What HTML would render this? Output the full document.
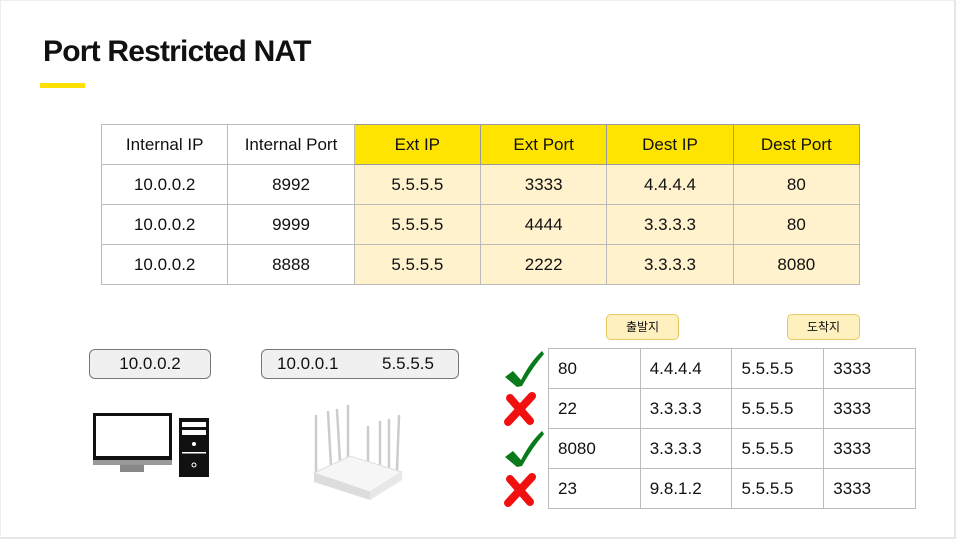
<!DOCTYPE html>
<html><head><meta charset="utf-8"><style>
*{margin:0;padding:0;box-sizing:border-box}
body{width:960px;height:542px;background:#fff;position:relative;overflow:hidden;font-family:"Liberation Sans","Noto Sans CJK KR",sans-serif;color:#111}
.frame{position:absolute;left:0;top:0;width:956px;height:539px;border-right:2px solid #e6e6e6;border-bottom:2px solid #e6e6e6;border-top:1px solid #eee;border-left:1px solid #eee}
h1{position:absolute;left:43px;top:35px;font-size:30px;font-weight:bold;letter-spacing:-0.8px}
.bar{position:absolute;left:40px;top:83px;width:45px;height:5px;background:#ffe000}
table{position:absolute;border-collapse:collapse;font-size:17px}
td{border:1.5px solid #bbb;height:40px;text-align:center}
#t1{left:101px;top:124px;width:759px}
#t1 td{width:126.5px}
.y{background:#ffe400;border-color:#999}
.ly{background:#fff2cc}
#t2{left:548px;top:348px;width:368px}
#t2 td{width:92px;text-align:left;padding-left:9px}
.lab{position:absolute;top:349px;height:30px;border:1px solid #777;border-radius:6px;background:#f0f0f0;font-size:17px;line-height:28px}
.btn{position:absolute;top:314px;width:73px;height:26px;border:1px solid #e8c860;border-radius:5px;background:#fff0c0;font-size:12px;text-align:center;line-height:24px}
</style></head><body>
<div class="frame"></div>
<h1>Port Restricted NAT</h1>
<div class="bar"></div>
<table id="t1">
<tr><td>Internal IP</td><td>Internal Port</td><td class="y">Ext IP</td><td class="y">Ext Port</td><td class="y">Dest IP</td><td class="y">Dest Port</td></tr>
<tr><td>10.0.0.2</td><td>8992</td><td class="ly">5.5.5.5</td><td class="ly">3333</td><td class="ly">4.4.4.4</td><td class="ly">80</td></tr>
<tr><td>10.0.0.2</td><td>9999</td><td class="ly">5.5.5.5</td><td class="ly">4444</td><td class="ly">3.3.3.3</td><td class="ly">80</td></tr>
<tr><td>10.0.0.2</td><td>8888</td><td class="ly">5.5.5.5</td><td class="ly">2222</td><td class="ly">3.3.3.3</td><td class="ly">8080</td></tr>
</table>
<div class="lab" style="left:89px;width:122px;text-align:center">10.0.0.2</div>
<div class="lab" style="left:261px;width:198px"><span style="position:absolute;left:15px">10.0.0.1</span><span style="position:absolute;left:120px">5.5.5.5</span></div>
<div class="btn" style="left:606px">출발지</div>
<div class="btn" style="left:787px">도착지</div>
<table id="t2">
<tr><td>80</td><td>4.4.4.4</td><td>5.5.5.5</td><td>3333</td></tr>
<tr><td>22</td><td>3.3.3.3</td><td>5.5.5.5</td><td>3333</td></tr>
<tr><td>8080</td><td>3.3.3.3</td><td>5.5.5.5</td><td>3333</td></tr>
<tr><td>23</td><td>9.8.1.2</td><td>5.5.5.5</td><td>3333</td></tr>
</table>
<svg style="position:absolute;left:0;top:0" width="960" height="542">
<g fill="#0a7a1a"><path d="M505 377 L513 371 L521 380 Q530 362 542 351 L544 354 Q532 368 522 386 L517 387 Z"/><path d="M505 457 L513 451 L521 460 Q530 442 542 431 L544 434 Q532 448 522 466 L517 467 Z"/></g>
<g stroke="#f01010" stroke-width="8" stroke-linecap="round"><path d="M510 398 L530 421 M532 396 L508 422"/><path d="M510 479 L530 502 M532 477 L508 503"/></g>
<rect x="93" y="413" width="79" height="50" fill="#111"/><rect x="96" y="416" width="73" height="40" fill="#fff"/><rect x="93" y="460" width="79" height="5" fill="#999"/><rect x="120" y="465" width="24" height="7" fill="#888"/>
<rect x="179" y="418" width="30" height="59" fill="#111"/><rect x="182" y="422" width="24" height="5" fill="#fff"/><rect x="182" y="430" width="24" height="5" fill="#fff"/><circle cx="194" cy="444" r="2" fill="#fff"/><rect x="182" y="452" width="24" height="1.5" fill="#fff"/><circle cx="194" cy="465" r="2" fill="none" stroke="#fff"/>
<g stroke="#ccc" stroke-width="2.5" stroke-linecap="round"><path d="M316 416 L316 475 M328 412 L331 466 M337 410 L340 462 M348 406 L348 458 M368 427 L368 488 M380 422 L380 485 M389 420 L389 478 M399 416 L397 470"/></g>
<path d="M314 473 L350 456 L402 472 L370 492 Z" fill="#f6f6f6" stroke="#ddd"/><path d="M314 473 L370 492 L370 500 L314 482 Z" fill="#ddd"/><path d="M370 492 L402 472 L402 480 L370 500 Z" fill="#e8e8e8"/>
</svg>
</body></html>
